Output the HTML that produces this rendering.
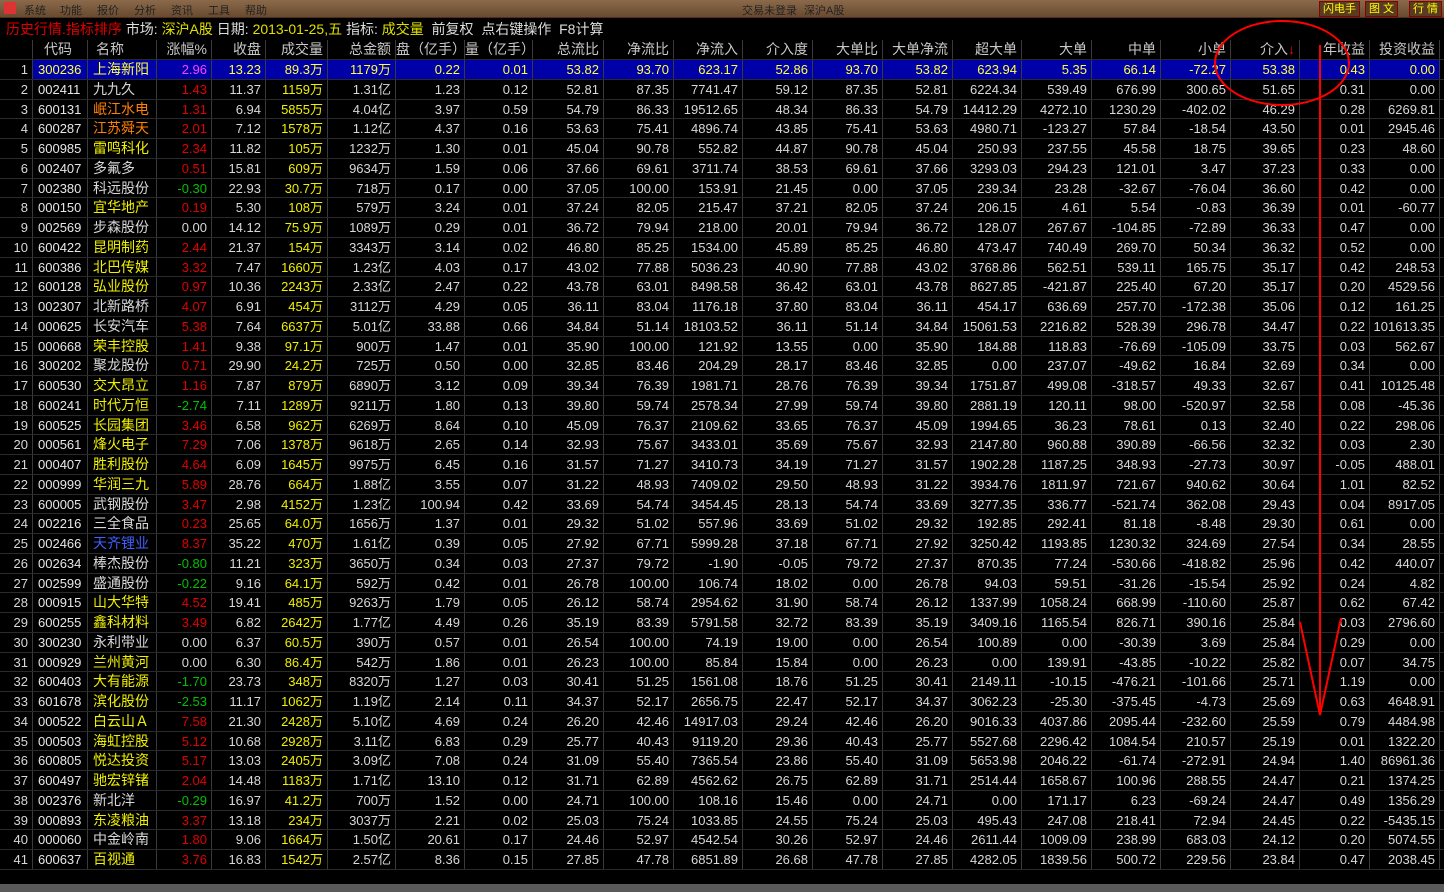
<!DOCTYPE html>
<html><head><meta charset="utf-8">
<style>
body{margin:0;width:1444px;height:892px;background:#000;overflow:hidden;font-family:"Liberation Sans","WenQuanYi Zen Hei","Noto Sans CJK SC",sans-serif;position:relative}
#top{position:absolute;left:0;top:0;width:1444px;height:17px;background:linear-gradient(#8a6a4a,#6a4a30);border-bottom:1px solid #4a3020}
#top span.m{position:absolute;top:2px;font-size:11px;color:#222}
.btn{position:absolute;top:1px;height:14px;border:1px solid #800;color:#ff0;font-size:11px;line-height:14px;padding:0 3px;background:#5a3a20}
#title{position:absolute;left:6px;top:19px;font-size:14px;white-space:nowrap;color:#ddd}
#tbl{position:absolute;left:0;top:40px}
.r{position:absolute;left:0;width:1444px;height:19.75px;border-bottom:1px solid #2a2a2a;box-sizing:border-box}
.c{position:absolute;top:0;height:100%;border-right:1px solid #3a3a3a;box-sizing:border-box;text-align:right;padding-right:4px;font-size:13px;line-height:19px;color:#d8d8d8;white-space:nowrap}
.h .c{color:#c8c8c8;font-size:14px}
.sel .c{background:#0000a8;color:#ffff40!important}
.sel .c:first-child{background:#000;color:#d8d8d8!important}
#bot{position:absolute;left:0;top:884px;width:1444px;height:8px;background:#5a5a5a}
</style></head><body>
<div id="top">
<span class="m" style="left:4px;width:12px;height:12px;top:2px;background:#d33;display:block"></span>
<span class="m" style="left:24px">系统</span><span class="m" style="left:60px">功能</span><span class="m" style="left:97px">报价</span><span class="m" style="left:134px">分析</span><span class="m" style="left:171px">资讯</span><span class="m" style="left:208px">工具</span><span class="m" style="left:245px">帮助</span>
<span class="m" style="left:742px">交易未登录</span><span class="m" style="left:804px">深沪A股</span>
<span class="btn" style="left:1319px">闪电手</span><span class="btn" style="left:1365px">图 文</span><span class="btn" style="left:1409px">行 情</span>
</div>
<div id="title"><span style="color:#e00000">历史行情.指标排序</span> 市场: <span style="color:#e0e000">深沪A股</span> 日期: <span style="color:#e0e000">2013-01-25,五</span> 指标: <span style="color:#e0e000">成交量</span> &nbsp;前复权 &nbsp;点右键操作 &nbsp;F8计算</div>
<div id="tbl"></div>
<div id="bot"></div>
<svg style="position:absolute;left:0;top:0" width="1444" height="892">
<ellipse cx="1282" cy="63" rx="67" ry="42" fill="none" stroke="#f00" stroke-width="2"/>
<line x1="1320" y1="45" x2="1320" y2="715" stroke="#f00" stroke-width="2"/>
<polyline points="1300,622 1320,715 1341,618" fill="none" stroke="#f00" stroke-width="2"/>
</svg>
<script>
var R=[0,33,88,157,212,266,328,396,465,533,604,674,743,813,883,953,1022,1092,1161,1231,1300,1370,1440];
var H=["","代码","名称","涨幅%","收盘","成交量","总金额","盘（亿手）","量（亿手）","总流比","净流比","净流入","介入度","大单比","大单净流","超大单","大单","中单","小单","介入<span style='color:#f00'>↓</span>","年收益","投资收益"];
var D=`300236 上海新阳 2.96 13.23 89.3万 1179万 0.22 0.01 53.82 93.70 623.17 52.86 93.70 53.82 623.94 5.35 66.14 -72.27 53.38 0.43 0.00
002411 九九久 1.43 11.37 1159万 1.31亿 1.23 0.12 52.81 87.35 7741.47 59.12 87.35 52.81 6224.34 539.49 676.99 300.65 51.65 0.31 0.00
600131 岷江水电 1.31 6.94 5855万 4.04亿 3.97 0.59 54.79 86.33 19512.65 48.34 86.33 54.79 14412.29 4272.10 1230.29 -402.02 46.29 0.28 6269.81
600287 江苏舜天 2.01 7.12 1578万 1.12亿 4.37 0.16 53.63 75.41 4896.74 43.85 75.41 53.63 4980.71 -123.27 57.84 -18.54 43.50 0.01 2945.46
600985 雷鸣科化 2.34 11.82 105万 1232万 1.30 0.01 45.04 90.78 552.82 44.87 90.78 45.04 250.93 237.55 45.58 18.75 39.65 0.23 48.60
002407 多氟多 0.51 15.81 609万 9634万 1.59 0.06 37.66 69.61 3711.74 38.53 69.61 37.66 3293.03 294.23 121.01 3.47 37.23 0.33 0.00
002380 科远股份 -0.30 22.93 30.7万 718万 0.17 0.00 37.05 100.00 153.91 21.45 0.00 37.05 239.34 23.28 -32.67 -76.04 36.60 0.42 0.00
000150 宜华地产 0.19 5.30 108万 579万 3.24 0.01 37.24 82.05 215.47 37.21 82.05 37.24 206.15 4.61 5.54 -0.83 36.39 0.01 -60.77
002569 步森股份 0.00 14.12 75.9万 1089万 0.29 0.01 36.72 79.94 218.00 20.01 79.94 36.72 128.07 267.67 -104.85 -72.89 36.33 0.47 0.00
600422 昆明制药 2.44 21.37 154万 3343万 3.14 0.02 46.80 85.25 1534.00 45.89 85.25 46.80 473.47 740.49 269.70 50.34 36.32 0.52 0.00
600386 北巴传媒 3.32 7.47 1660万 1.23亿 4.03 0.17 43.02 77.88 5036.23 40.90 77.88 43.02 3768.86 562.51 539.11 165.75 35.17 0.42 248.53
600128 弘业股份 0.97 10.36 2243万 2.33亿 2.47 0.22 43.78 63.01 8498.58 36.42 63.01 43.78 8627.85 -421.87 225.40 67.20 35.17 0.20 4529.56
002307 北新路桥 4.07 6.91 454万 3112万 4.29 0.05 36.11 83.04 1176.18 37.80 83.04 36.11 454.17 636.69 257.70 -172.38 35.06 0.12 161.25
000625 长安汽车 5.38 7.64 6637万 5.01亿 33.88 0.66 34.84 51.14 18103.52 36.11 51.14 34.84 15061.53 2216.82 528.39 296.78 34.47 0.22 101613.35
000668 荣丰控股 1.41 9.38 97.1万 900万 1.47 0.01 35.90 100.00 121.92 13.55 0.00 35.90 184.88 118.83 -76.69 -105.09 33.75 0.03 562.67
300202 聚龙股份 0.71 29.90 24.2万 725万 0.50 0.00 32.85 83.46 204.29 28.17 83.46 32.85 0.00 237.07 -49.62 16.84 32.69 0.34 0.00
600530 交大昂立 1.16 7.87 879万 6890万 3.12 0.09 39.34 76.39 1981.71 28.76 76.39 39.34 1751.87 499.08 -318.57 49.33 32.67 0.41 10125.48
600241 时代万恒 -2.74 7.11 1289万 9211万 1.80 0.13 39.80 59.74 2578.34 27.99 59.74 39.80 2881.19 120.11 98.00 -520.97 32.58 0.08 -45.36
600525 长园集团 3.46 6.58 962万 6269万 8.64 0.10 45.09 76.37 2109.62 33.65 76.37 45.09 1994.65 36.23 78.61 0.13 32.40 0.22 298.06
000561 烽火电子 7.29 7.06 1378万 9618万 2.65 0.14 32.93 75.67 3433.01 35.69 75.67 32.93 2147.80 960.88 390.89 -66.56 32.32 0.03 2.30
000407 胜利股份 4.64 6.09 1645万 9975万 6.45 0.16 31.57 71.27 3410.73 34.19 71.27 31.57 1902.28 1187.25 348.93 -27.73 30.97 -0.05 488.01
000999 华润三九 5.89 28.76 664万 1.88亿 3.55 0.07 31.22 48.93 7409.02 29.50 48.93 31.22 3934.76 1811.97 721.67 940.62 30.64 1.01 82.52
600005 武钢股份 3.47 2.98 4152万 1.23亿 100.94 0.42 33.69 54.74 3454.45 28.13 54.74 33.69 3277.35 336.77 -521.74 362.08 29.43 0.04 8917.05
002216 三全食品 0.23 25.65 64.0万 1656万 1.37 0.01 29.32 51.02 557.96 33.69 51.02 29.32 192.85 292.41 81.18 -8.48 29.30 0.61 0.00
002466 天齐锂业 8.37 35.22 470万 1.61亿 0.39 0.05 27.92 67.71 5999.28 37.18 67.71 27.92 3250.42 1193.85 1230.32 324.69 27.54 0.34 28.55
002634 棒杰股份 -0.80 11.21 323万 3650万 0.34 0.03 27.37 79.72 -1.90 -0.05 79.72 27.37 870.35 77.24 -530.66 -418.82 25.96 0.42 440.07
002599 盛通股份 -0.22 9.16 64.1万 592万 0.42 0.01 26.78 100.00 106.74 18.02 0.00 26.78 94.03 59.51 -31.26 -15.54 25.92 0.24 4.82
000915 山大华特 4.52 19.41 485万 9263万 1.79 0.05 26.12 58.74 2954.62 31.90 58.74 26.12 1337.99 1058.24 668.99 -110.60 25.87 0.62 67.42
600255 鑫科材料 3.49 6.82 2642万 1.77亿 4.49 0.26 35.19 83.39 5791.58 32.72 83.39 35.19 3409.16 1165.54 826.71 390.16 25.84 0.03 2796.60
300230 永利带业 0.00 6.37 60.5万 390万 0.57 0.01 26.54 100.00 74.19 19.00 0.00 26.54 100.89 0.00 -30.39 3.69 25.84 0.29 0.00
000929 兰州黄河 0.00 6.30 86.4万 542万 1.86 0.01 26.23 100.00 85.84 15.84 0.00 26.23 0.00 139.91 -43.85 -10.22 25.82 0.07 34.75
600403 大有能源 -1.70 23.73 348万 8320万 1.27 0.03 30.41 51.25 1561.08 18.76 51.25 30.41 2149.11 -10.15 -476.21 -101.66 25.71 1.19 0.00
601678 滨化股份 -2.53 11.17 1062万 1.19亿 2.14 0.11 34.37 52.17 2656.75 22.47 52.17 34.37 3062.23 -25.30 -375.45 -4.73 25.69 0.63 4648.91
000522 白云山Ａ 7.58 21.30 2428万 5.10亿 4.69 0.24 26.20 42.46 14917.03 29.24 42.46 26.20 9016.33 4037.86 2095.44 -232.60 25.59 0.79 4484.98
000503 海虹控股 5.12 10.68 2928万 3.11亿 6.83 0.29 25.77 40.43 9119.20 29.36 40.43 25.77 5527.68 2296.42 1084.54 210.57 25.19 0.01 1322.20
600805 悦达投资 5.17 13.03 2405万 3.09亿 7.08 0.24 31.09 55.40 7365.54 23.86 55.40 31.09 5653.98 2046.22 -61.74 -272.91 24.94 1.40 86961.36
600497 驰宏锌锗 2.04 14.48 1183万 1.71亿 13.10 0.12 31.71 62.89 4562.62 26.75 62.89 31.71 2514.44 1658.67 100.96 288.55 24.47 0.21 1374.25
002376 新北洋 -0.29 16.97 41.2万 700万 1.52 0.00 24.71 100.00 108.16 15.46 0.00 24.71 0.00 171.17 6.23 -69.24 24.47 0.49 1356.29
000893 东凌粮油 3.37 13.18 234万 3037万 2.21 0.02 25.03 75.24 1033.85 24.55 75.24 25.03 495.43 247.08 218.41 72.94 24.45 0.22 -5435.15
000060 中金岭南 1.80 9.06 1664万 1.50亿 20.61 0.17 24.46 52.97 4542.54 30.26 52.97 24.46 2611.44 1009.09 238.99 683.03 24.12 0.20 5074.55
600637 百视通 3.76 16.83 1542万 2.57亿 8.36 0.15 27.85 47.78 6851.89 26.68 47.78 27.85 4282.05 1839.56 500.72 229.56 23.84 0.47 2038.45`.split("\n");
var NC="YWOOYWWYWYYYWWYWYYYYYYWWBWWYYWYYYYYYYWYWY";
var CM={Y:"#f0f000",W:"#d8d8d8",O:"#ff8000",B:"#4060ff"};
var t=document.getElementById("tbl"),h="";
function row(cells,top,cls){var s='<div class="r '+cls+'" style="top:'+top+'px">';for(var i=0;i<22;i++){var st=cells[i][1]||"";s+='<div class="c" style="left:'+R[i]+'px;width:'+(R[i+1]-R[i])+'px;'+st+'">'+cells[i][0]+'</div>';}return s+'</div>';}
h+=row(H.map(function(x,i){return [x,i==2?"text-align:left;padding-left:8px":(i==1?"text-align:center":"")]}),0,"h");
for(var k=0;k<D.length;k++){var f=D[k].split(" "),c=[[k+1,""]];
 c.push([f[0],"text-align:left;padding-left:5px;color:#e8e8e8"]);
 c.push([f[1],"text-align:left;padding-left:5px;font-size:14px;color:"+CM[NC[k]]]);
 var v=parseFloat(f[2]);c.push([f[2],"color:"+(k==0?"#ff40ff !important":v>0?"#e00000":v<0?"#00c000":"#d8d8d8")]);
 c.push([f[3],""]);c.push([f[4],"color:#f0f000"]);
 for(var j=5;j<21;j++)c.push([f[j],""]);
 h+=row(c,20+k*19.75,k==0?"sel":"");}
t.innerHTML=h;
</script>
</body></html>
